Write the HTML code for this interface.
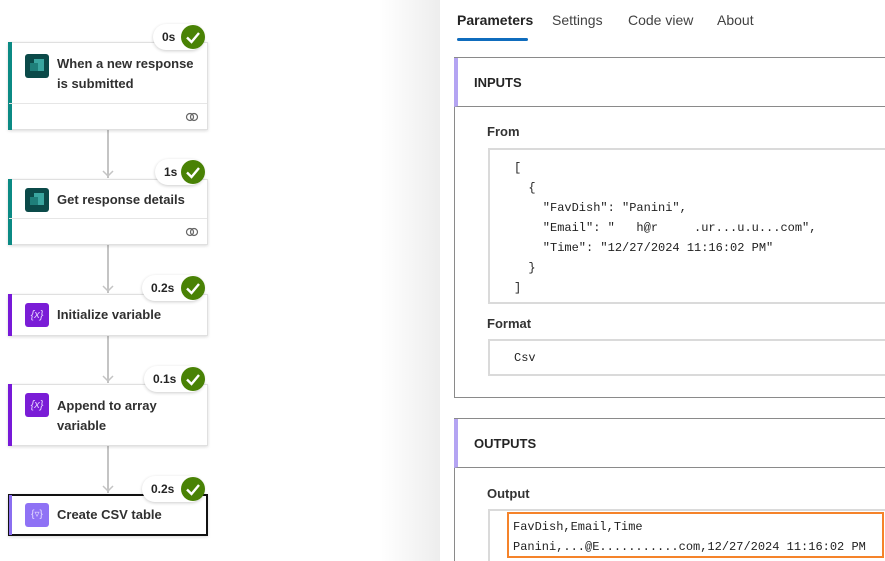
<!DOCTYPE html>
<html style="overflow:hidden;width:885px;height:561px"><head><style>
*{box-sizing:border-box;margin:0;padding:0}
body{width:885px;height:561px;overflow:hidden;background:#fff;font-family:"Liberation Sans",sans-serif;position:relative;color:#242424}
.canvas{position:absolute;left:0;top:0;width:440px;height:561px;background:#fff}
.shadow{position:absolute;left:380px;top:0;width:60px;height:561px;background:linear-gradient(90deg,rgba(0,0,0,0),rgba(0,0,0,0.07))}
.line{position:absolute;left:107px;width:2px;background:#c4c4c4}
.arrow{position:absolute;left:102px;width:12px;height:8px}
.card{position:absolute;left:8px;width:200px;background:#fff;border:1px solid #e0e0e0;box-shadow:0 1px 3px rgba(0,0,0,.15);}
.card .bar{position:absolute;left:-1px;top:-1px;bottom:-1px;width:4px}
.card .ic{position:absolute;left:16px;width:24px;height:24px;border-radius:3px}
.card .t{position:absolute;left:48px;font-size:13px;font-weight:bold;line-height:20px;color:#303030}
.card .foot{position:absolute;left:0;right:0;bottom:0;height:26px;border-top:1px solid #e6e6e6}
.badge{position:absolute;height:26px;border-radius:13px;background:#fff;box-shadow:0 1px 3px rgba(0,0,0,.2);font-size:12px;font-weight:bold;line-height:26px;padding-left:9px}
.badge .ck{position:absolute;right:-1px;top:1px;width:24px;height:24px;border-radius:50%;background:#498205}
.tab{position:absolute;top:12px;font-size:14px;color:#424242}
.sec{position:absolute;left:454px;width:440px;border:1px solid #8a8a8a;background:#fff}
.sec .hd{height:49px;border-bottom:1px solid #8a8a8a;border-left:4px solid #b4a4f2;margin-left:-1px;font-size:13px;font-weight:bold;padding:17px 0 0 16px}
.lbl{position:absolute;font-size:13px;font-weight:bold;color:#333}
.box{position:absolute;left:488px;width:400px;border:2px solid #dadada;font-family:"Liberation Mono",monospace;font-size:12px;color:#222}
.box pre{font-family:inherit;line-height:20px}
</style></head><body>
<div class="canvas"></div>
<div class="shadow"></div>

<div class="line" style="top:130px;height:48px"></div>
<div class="line" style="top:245px;height:48px"></div>
<div class="line" style="top:336px;height:47px"></div>
<div class="line" style="top:446px;height:47px"></div>
<svg class="arrow" style="top:170px" viewBox="0 0 12 8"><path d="M1 1L6 6L11 1" stroke="#c4c4c4" stroke-width="1.5" fill="none"/></svg>
<svg class="arrow" style="top:285px" viewBox="0 0 12 8"><path d="M1 1L6 6L11 1" stroke="#c4c4c4" stroke-width="1.5" fill="none"/></svg>
<svg class="arrow" style="top:375px" viewBox="0 0 12 8"><path d="M1 1L6 6L11 1" stroke="#c4c4c4" stroke-width="1.5" fill="none"/></svg>
<svg class="arrow" style="top:485px" viewBox="0 0 12 8"><path d="M1 1L6 6L11 1" stroke="#c4c4c4" stroke-width="1.5" fill="none"/></svg>

<div class="card" style="top:42px;height:88px"><div class="bar" style="background:#0b8a84"></div>
<div class="ic" style="top:11px;background:#0b4a49"><svg width="24" height="24"><rect x="9" y="5" width="10" height="12" fill="#3aa6a0"/><rect x="5" y="9" width="8" height="8" fill="#1f7f7a"/></svg></div>
<div class="t" style="top:11px">When a new response<br>is submitted</div>
<div class="foot"><svg style="position:absolute;right:8px;top:7px" width="14" height="12" viewBox="0 0 14 12"><circle cx="5" cy="6" r="3.5" fill="none" stroke="#666" stroke-width="1.2"/><circle cx="9" cy="6" r="3.5" fill="none" stroke="#666" stroke-width="1.2"/></svg></div></div>
<div class="badge" style="left:153px;top:24px;width:51px">0s<div class="ck"><svg width="24" height="24"><path d="M6 12.5L10.5 17L18 8" stroke="#fff" stroke-width="2.4" fill="none"/></svg></div></div>

<div class="card" style="top:179px;height:66px"><div class="bar" style="background:#0b8a84"></div>
<div class="ic" style="top:8px;background:#0b4a49"><svg width="24" height="24"><rect x="9" y="5" width="10" height="12" fill="#3aa6a0"/><rect x="5" y="9" width="8" height="8" fill="#1f7f7a"/></svg></div>
<div class="t" style="top:10px">Get response details</div>
<div class="foot"><svg style="position:absolute;right:8px;top:7px" width="14" height="12" viewBox="0 0 14 12"><circle cx="5" cy="6" r="3.5" fill="none" stroke="#666" stroke-width="1.2"/><circle cx="9" cy="6" r="3.5" fill="none" stroke="#666" stroke-width="1.2"/></svg></div></div>
<div class="badge" style="left:155px;top:159px;width:49px">1s<div class="ck"><svg width="24" height="24"><path d="M6 12.5L10.5 17L18 8" stroke="#fff" stroke-width="2.4" fill="none"/></svg></div></div>

<div class="card" style="top:294px;height:42px"><div class="bar" style="background:#7719d8"></div>
<div class="ic" style="top:8px;background:#7a1dd6;color:#e6d6ff;font-size:11px;text-align:center;line-height:24px;font-style:italic">{x}</div>
<div class="t" style="top:10px">Initialize variable</div></div>
<div class="badge" style="left:142px;top:275px;width:62px">0.2s<div class="ck"><svg width="24" height="24"><path d="M6 12.5L10.5 17L18 8" stroke="#fff" stroke-width="2.4" fill="none"/></svg></div></div>

<div class="card" style="top:384px;height:62px"><div class="bar" style="background:#7719d8"></div>
<div class="ic" style="top:8px;background:#7a1dd6;color:#e6d6ff;font-size:11px;text-align:center;line-height:24px;font-style:italic">{x}</div>
<div class="t" style="top:11px">Append to array<br>variable</div></div>
<div class="badge" style="left:144px;top:366px;width:60px">0.1s<div class="ck"><svg width="24" height="24"><path d="M6 12.5L10.5 17L18 8" stroke="#fff" stroke-width="2.4" fill="none"/></svg></div></div>

<div class="card" style="top:494px;height:42px;border:2px solid #111"><div class="bar" style="background:#8a6ef0;width:3px"></div>
<div class="ic" style="top:7px;left:15px;background:#8f72f5;color:#e8e0ff;font-size:10px;text-align:center;line-height:24px">{▿}</div>
<div class="t" style="top:9px;left:47px">Create CSV table</div></div>
<div class="badge" style="left:142px;top:476px;width:62px">0.2s<div class="ck"><svg width="24" height="24"><path d="M6 12.5L10.5 17L18 8" stroke="#fff" stroke-width="2.4" fill="none"/></svg></div></div>

<div class="tab" style="left:457px;font-weight:bold;color:#242424">Parameters</div>
<div style="position:absolute;left:457px;top:38px;width:71px;height:3px;border-radius:2px;background:#0f6cbd"></div>
<div class="tab" style="left:552px">Settings</div>
<div class="tab" style="left:628px">Code view</div>
<div class="tab" style="left:717px">About</div>

<div class="sec" style="top:57px;height:341px"><div class="hd">INPUTS</div></div>
<div class="lbl" style="left:487px;top:124px">From</div>
<div class="box" style="top:148px;height:156px"><pre style="padding:8px 0 0 24px">[
  {
    "FavDish": "Panini",
    "Email": "   h@r     .ur...u.u...com",
    "Time": "12/27/2024 11:16:02 PM"
  }
]</pre></div>
<div class="lbl" style="left:487px;top:316px">Format</div>
<div class="box" style="top:339px;height:37px"><pre style="padding:7px 0 0 24px">Csv</pre></div>

<div class="sec" style="top:418px;height:143px;border-bottom:none"><div class="hd">OUTPUTS</div></div>
<div class="lbl" style="left:487px;top:486px">Output</div>
<div class="box" style="top:509px;height:52px;border-bottom:none"></div>
<div style="position:absolute;left:507px;top:512px;width:377px;height:46px;border:2px solid #f5832a;font-family:'Liberation Mono',monospace;font-size:12px;color:#222"><pre style="font-family:inherit;line-height:20px;padding:3px 0 0 4px">FavDish,Email,Time
Panini,...@E...........com,12/27/2024 11:16:02 PM</pre></div>
</body></html>
